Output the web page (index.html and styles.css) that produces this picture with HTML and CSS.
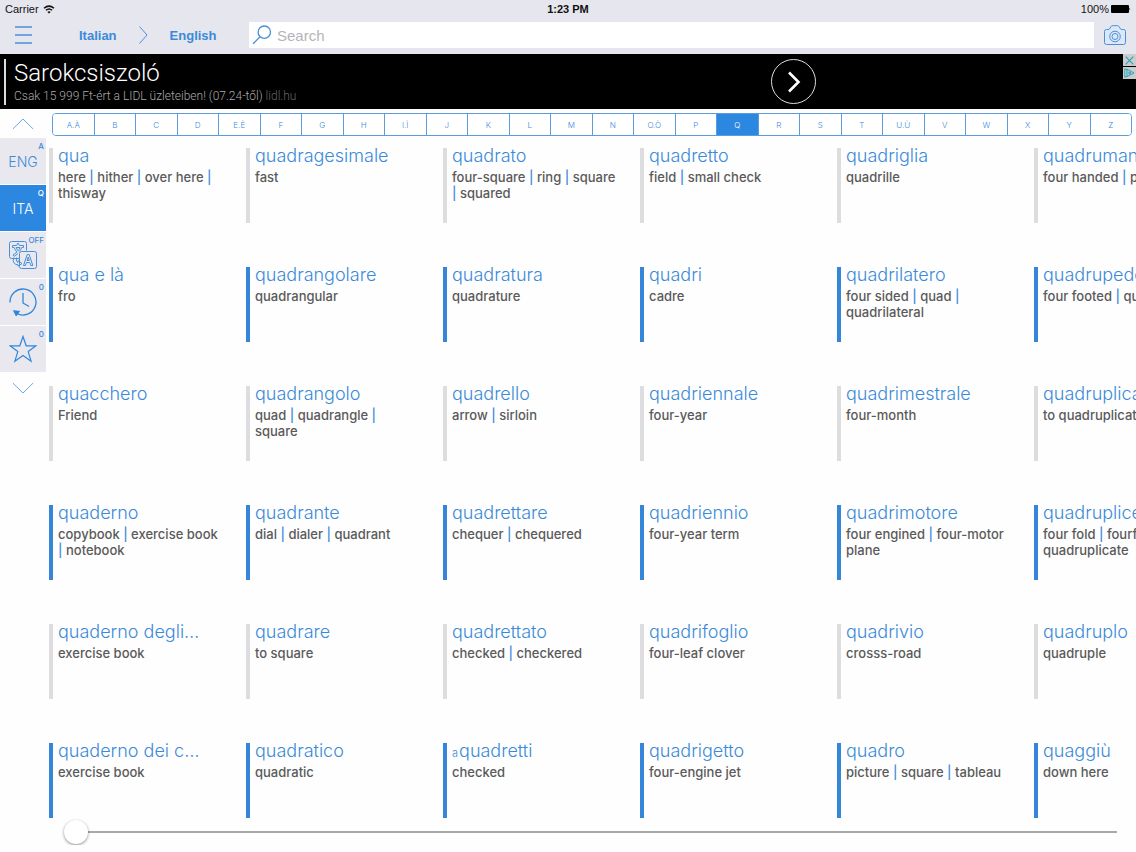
FILE: index.html
```html
<!DOCTYPE html>
<html lang="en">
<head>
    <meta charset="UTF-8">
    <meta name="viewport" content="width=device-width, initial-scale=1.0">
    <title>Italian - English Dictionary</title>
    <link rel="stylesheet" href="styles.css">
</head>
<body>

<header class="top">
    <div class="status">
        <div class="status-left">
            <span>Carrier</span>
            <svg width="12" height="9" viewBox="0 0 12 9" fill="none" stroke="#111" stroke-width="1.5"><path d="M1 3.2Q6 -1 11 3.2M2.9 5.3Q6 2.7 9.1 5.3"/><path d="M6 8.6L4.3 6.9Q6 5.6 7.7 6.9Z" fill="#111" stroke="none"/></svg>
        </div>
        <div class="clock">1:23 PM</div>
        <div class="status-right">
            <span>100%</span>
            <svg width="20" height="8" viewBox="0 0 20 8"><rect width="18" height="8" rx="1" fill="#000"/><path d="M18.5 2.5Q20 4 18.5 5.5Z" fill="#000"/></svg>
        </div>
    </div>
    <div class="toolbar">
        <button class="icon-btn menu-btn" aria-label="Menu">
            <svg width="18" height="18" viewBox="0 0 18 18" fill="none" stroke="#4a90d9" stroke-width="1.3"><path d="M0 1H17M0 9H17M0 17H17"/></svg>
        </button>
        <div class="langs">
            <button class="lang">Italian</button>
            <svg width="9" height="18" viewBox="0 0 9 18" fill="none" stroke="#4a90d9"><path d="M.5 .5L8 9L.5 17.5"/></svg>
            <button class="lang">English</button>
        </div>
        <label class="search">
            <svg width="20" height="20" viewBox="0 0 20 20" fill="none" stroke="#4a90d9" stroke-width="1.3"><circle cx="12.3" cy="7.2" r="6.2"/><path d="M8 11.8L1 18.8"/></svg>
            <input type="text" placeholder="Search" aria-label="Search">
        </label>
        <button class="icon-btn camera-btn" aria-label="Camera">
            <svg width="22" height="20" viewBox="0 0 22 20" fill="#dce8f8" stroke="#4a90d9"><path d="M2.5 4.5H5L7.3 1.2Q7.6.7 8.2.7H13.8Q14.4.7 14.7 1.2L17 4.5H19.5Q21.5 4.5 21.5 6.5V17.5Q21.5 19.5 19.5 19.5H2.5Q.5 19.5.5 17.5V6.5Q.5 4.5 2.5 4.5Z"/><circle cx="11" cy="11.5" r="5.3"/><circle cx="11" cy="11.5" r="3"/></svg>
        </button>
    </div>
</header>

<section class="ad">
    <div class="ad-text">
        <div class="ad-title">Sarokcsiszoló</div>
        <div class="ad-sub">Csak 15 999 Ft-ért a LIDL üzleteiben! (07.24-től) <a href="#">lidl.hu</a></div>
    </div>
    <button class="ad-go" aria-label="Open">
        <svg width="14" height="22" viewBox="0 0 14 22" fill="none" stroke="#fff" stroke-width="2.6"><path d="M2 1.5L11.5 11L2 20.5"/></svg>
    </button>
    <div class="ad-tools">
        <button aria-label="Close ad"><svg width="9" height="9" viewBox="0 0 9 9" stroke="#2ba3bd" stroke-width="1.2"><path d="M.7 .7L8.3 8.3M8.3 .7L.7 8.3"/></svg></button>
        <button aria-label="About this ad"><svg width="11" height="10" viewBox="0 0 11 10" fill="none" stroke="#2ba3bd"><path d="M.8 .8V9.2M3 8.6V1.2L10 5L3 8.6M.8 .8L3 1.6M.8 9.2L3 8.4"/><path d="M5 3.8V6.2L7 5Z"/></svg></button>
    </div>
</section>

<main class="page">
    <nav class="side">
        <button class="arrow" aria-label="Up"><svg width="22" height="12" viewBox="0 0 22 12" fill="none" stroke="#6fa8df"><path d="M.8 11L11 1L21.2 11"/></svg></button>
        <button class="tab"><sup>A</sup>ENG</button>
        <button class="tab active"><sup>Q</sup>ITA</button>
        <button class="tab" aria-label="Translate"><sup>OFF</sup>
            <svg width="28" height="28" viewBox="0 0 28 28" fill="none" stroke="#4a90d9"><path d="M10.5 17.5H2.5Q.5 17.5.5 15.5V2.5Q.5.5 2.5.5H15.5Q17.5.5 17.5 2.5V9.5"/><rect x="10.5" y="10.5" width="17" height="17" rx="2"/><path d="M3.5 4.5H7.5L9 2L10.5 4.5H14.5V6.5H12.8Q11.8 9 10.2 10.6M3.5 4.5V6.5H5.2Q6.2 9.3 8 11L4 14L5.2 15.4L9 12.6M7.2 6.5Q8 8.5 9.1 9.7Q10.3 8.5 11 6.5Z"/><path d="M4.5 16.5Q3 23.5 9 23.8V25.2L13 22.5L9 19.6V21.5Q6.5 21 7.5 16.5"/><path d="M14.5 24.5L18.2 13.5H20.2L23.8 24.5H21.8L20.8 21.5H17.4L16.4 24.5ZM18 19.5H20.3L19.2 16Z"/></svg>
        </button>
        <button class="tab" aria-label="History"><sup>0</sup>
            <svg width="28" height="28" viewBox="0 0 28 28" fill="none" stroke="#2f86dc" stroke-width="1.3"><path d="M1 14.5A13 13 0 1 1 7.5 25.3M14 5V15L20 18.5"/><path d="M5 23L10 23.5L7.2 27.5Z" fill="#2f86dc"/></svg>
        </button>
        <button class="tab" aria-label="Favorites"><sup>0</sup>
            <svg width="28" height="28" viewBox="0 0 28 28" fill="none" stroke="#2f86dc" stroke-width="1.2"><path d="M14 1.5L17.2 10.8H27L19.2 16.6L22.1 26.2L14 20.5L5.9 26.2L8.8 16.6L1 10.8H10.8Z"/></svg>
        </button>
        <button class="arrow" aria-label="Down"><svg width="22" height="12" viewBox="0 0 22 12" fill="none" stroke="#6fa8df"><path d="M.8 1L11 11L21.2 1"/></svg></button>
    </nav>

    <div class="content">
        <div class="letters">
            <button>A.À</button>
            <button>B</button>
            <button>C</button>
            <button>D</button>
            <button>E.È</button>
            <button>F</button>
            <button>G</button>
            <button>H</button>
            <button>I.Ì</button>
            <button>J</button>
            <button>K</button>
            <button>L</button>
            <button>M</button>
            <button>N</button>
            <button>O.Ò</button>
            <button>P</button>
            <button class="active">Q</button>
            <button>R</button>
            <button>S</button>
            <button>T</button>
            <button>U.Ù</button>
            <button>V</button>
            <button>W</button>
            <button>X</button>
            <button>Y</button>
            <button>Z</button>
        </div>

        <div class="words">
            <article class="word"><h2>qua</h2><p>here <i>|</i> hither <i>|</i> over here <i>|</i> thisway</p></article>
            <article class="word"><h2>qua e là</h2><p>fro</p></article>
            <article class="word"><h2>quacchero</h2><p>Friend</p></article>
            <article class="word"><h2>quaderno</h2><p>copybook <i>|</i> exercise book <i>|</i> notebook</p></article>
            <article class="word"><h2>quaderno degli…</h2><p>exercise book</p></article>
            <article class="word"><h2>quaderno dei c…</h2><p>exercise book</p></article>

            <article class="word"><h2>quadragesimale</h2><p>fast</p></article>
            <article class="word"><h2>quadrangolare</h2><p>quadrangular</p></article>
            <article class="word"><h2>quadrangolo</h2><p>quad <i>|</i> quadrangle <i>|</i> square</p></article>
            <article class="word"><h2>quadrante</h2><p>dial <i>|</i> dialer <i>|</i> quadrant</p></article>
            <article class="word"><h2>quadrare</h2><p>to square</p></article>
            <article class="word"><h2>quadratico</h2><p>quadratic</p></article>

            <article class="word"><h2>quadrato</h2><p>four-square <i>|</i> ring <i>|</i> square <i>|</i> squared</p></article>
            <article class="word"><h2>quadratura</h2><p>quadrature</p></article>
            <article class="word"><h2>quadrello</h2><p>arrow <i>|</i> sirloin</p></article>
            <article class="word"><h2>quadrettare</h2><p>chequer <i>|</i> chequered</p></article>
            <article class="word"><h2>quadrettato</h2><p>checked <i>|</i> checkered</p></article>
            <article class="word"><h2><small>a</small>quadretti</h2><p>checked</p></article>

            <article class="word"><h2>quadretto</h2><p>field <i>|</i> small check</p></article>
            <article class="word"><h2>quadri</h2><p>cadre</p></article>
            <article class="word"><h2>quadriennale</h2><p>four-year</p></article>
            <article class="word"><h2>quadriennio</h2><p>four-year term</p></article>
            <article class="word"><h2>quadrifoglio</h2><p>four-leaf clover</p></article>
            <article class="word"><h2>quadrigetto</h2><p>four-engine jet</p></article>

            <article class="word"><h2>quadriglia</h2><p>quadrille</p></article>
            <article class="word"><h2>quadrilatero</h2><p>four sided <i>|</i> quad <i>|</i> quadrilateral</p></article>
            <article class="word"><h2>quadrimestrale</h2><p>four-month</p></article>
            <article class="word"><h2>quadrimotore</h2><p>four engined <i>|</i> four-motor plane</p></article>
            <article class="word"><h2>quadrivio</h2><p>crosss-road</p></article>
            <article class="word"><h2>quadro</h2><p>picture <i>|</i> square <i>|</i> tableau</p></article>

            <article class="word"><h2>quadrumano</h2><p>four handed <i>|</i> primate</p></article>
            <article class="word"><h2>quadrupede</h2><p>four footed <i>|</i> quadruped</p></article>
            <article class="word"><h2>quadruplicare</h2><p>to quadruplicate</p></article>
            <article class="word"><h2>quadruplice</h2><p>four fold <i>|</i> fourfold <i>|</i> quadruplicate</p></article>
            <article class="word"><h2>quadruplo</h2><p>quadruple</p></article>
            <article class="word"><h2>quaggiù</h2><p>down here</p></article>
        </div>

        <input class="slider" type="range" min="0" max="100" value="0" aria-label="Position">
    </div>
</main>

</body>
</html>
```
FILE: styles.css
```css
* {
    box-sizing: border-box;
}
body {
    margin: 0;
    font-family: Inter, "Liberation Sans", Arial, sans-serif;
    background-color: #fefefe;
    color: #5a5a5a;
    overflow-x: hidden;
}
button {
    margin: 0;
    padding: 0;
    border: none;
    background: none;
    font-family: inherit;
    color: #3b8ad9;
    cursor: pointer;
}
svg {
    display: block;
}

/* header */
.top {
    height: 54px;
    background-color: #e6e6ee;
}
.status {
    display: grid;
    grid-template-columns: 1fr auto 1fr;
    height: 18px;
    padding: 0 5px;
    align-items: center;
    font-family: "Liberation Sans", Arial, sans-serif;
    font-size: 11px;
    color: #111;
}
.status-left,
.status-right {
    display: flex;
    align-items: center;
    gap: 4px;
}
.status-right {
    justify-content: flex-end;
    gap: 2px;
}
.clock {
    font-weight: bold;
}
.toolbar {
    display: flex;
    align-items: center;
    height: 34px;
    padding: 0 10px 0 15px;
}
.icon-btn {
    flex: none;
}
.langs {
    display: flex;
    align-items: center;
    gap: 22px;
    width: 170px;
    margin: 0 0 0 46px;
}
.lang {
    font-family: "Liberation Sans", Arial, sans-serif;
    font-size: 13px;
    font-weight: bold;
}
.search {
    display: flex;
    flex: 1;
    align-items: center;
    gap: 5px;
    height: 26px;
    padding: 0 3px;
    background-color: #fff;
}
.search input {
    flex: 1;
    min-width: 0;
    padding: 0;
    border: none;
    outline: none;
    background: none;
    font-family: "Liberation Sans", Arial, sans-serif;
    font-size: 15px;
}
.search input::placeholder {
    color: #b4b4b8;
}
.camera-btn {
    margin-left: 10px;
}

/* ad banner */
.ad {
    display: grid;
    grid-template-columns: 771px 1fr auto;
    align-items: center;
    height: 55px;
    background-color: #000;
    font-family: Roboto, sans-serif;
    font-weight: 300;
}
.ad-text {
    margin-left: 4px;
    padding-left: 8px;
    border-left: 2px solid #ddd;
}
.ad-title {
    font-size: 24px;
    line-height: 28px;
    color: #fff;
}
.ad-sub {
    font-size: 12px;
    line-height: 18px;
    color: #aaa;
}
.ad-sub a {
    color: #666;
    text-decoration: none;
}
.ad-go {
    display: flex;
    width: 45px;
    height: 45px;
    align-items: center;
    justify-content: center;
    border: 1px solid #ddd;
    border-radius: 50%;
}
.ad-tools {
    display: flex;
    flex-direction: column;
    gap: 1px;
    align-self: start;
}
.ad-tools button {
    display: flex;
    width: 13px;
    height: 12px;
    align-items: center;
    justify-content: center;
    background-color: #ccc;
}

/* page */
.page {
    display: flex;
}
.side {
    flex: none;
    width: 46px;
}
.arrow {
    display: flex;
    width: 100%;
    height: 29px;
    align-items: center;
    justify-content: center;
}
.tab {
    display: flex;
    position: relative;
    width: 100%;
    height: 46px;
    margin-bottom: 1px;
    align-items: center;
    justify-content: center;
    background-color: #e8e8ee;
    font-size: 14px;
    font-weight: 300;
}
.tab sup {
    position: absolute;
    top: 3px;
    right: 2px;
    font-size: 8px;
    font-weight: 500;
    line-height: 10px;
}
.tab.active {
    background-color: #2b87e0;
    color: #fff;
}
.content {
    flex: 1;
    min-width: 0;
}
.letters {
    display: flex;
    height: 23px;
    margin: 4px 4px 0 6px;
    border: 1px solid #5a9cdc;
    border-radius: 4px;
    overflow: hidden;
}
.letters button {
    flex: 1;
    border-left: 1px solid #5a9cdc;
    background-color: #fff;
    font-size: 8px;
    font-weight: 300;
}
.letters button:first-child {
    border-left: none;
}
.letters .active {
    background-color: #2b87e0;
    color: #fff;
}
.words {
    display: grid;
    grid-template-rows: repeat(6, 75px);
    grid-auto-flow: column;
    grid-auto-columns: 193px;
    gap: 44px 4px;
    margin-top: 6px;
    padding: 6px 0 0 3px;
    overflow: hidden;
}
.word {
    padding-left: 5px;
    border-left: 4px solid #dddde0;
}
.word:nth-child(even) {
    border-color: #3585d8;
}
.word h2 {
    height: 22px;
    margin: -3px 0 2px;
    font-size: 18px;
    font-weight: 300;
    line-height: 22px;
    color: #3b8ad9;
    white-space: nowrap;
}
.word small {
    margin-right: 1px;
    font-size: 11px;
    line-height: 11px;
}
.word p {
    width: 164px;
    margin: 0;
    font-size: 13px;
    font-weight: 500;
    line-height: 16px;
}
.word i {
    font-style: normal;
    color: #3b8ad9;
}

/* slider */
.slider {
    display: block;
    width: calc(100% - 37px);
    height: 26px;
    margin: 1px 0 0 18px;
    appearance: none;
    background: none;
}
.slider::-webkit-slider-runnable-track {
    height: 2px;
    background-color: #a9a9ad;
}
.slider::-webkit-slider-thumb {
    width: 24px;
    height: 24px;
    margin-top: -11px;
    appearance: none;
    border-radius: 50%;
    background-color: #fff;
    box-shadow: 0 1px 3px rgba(0, 0, 0, 0.45);
}
```
